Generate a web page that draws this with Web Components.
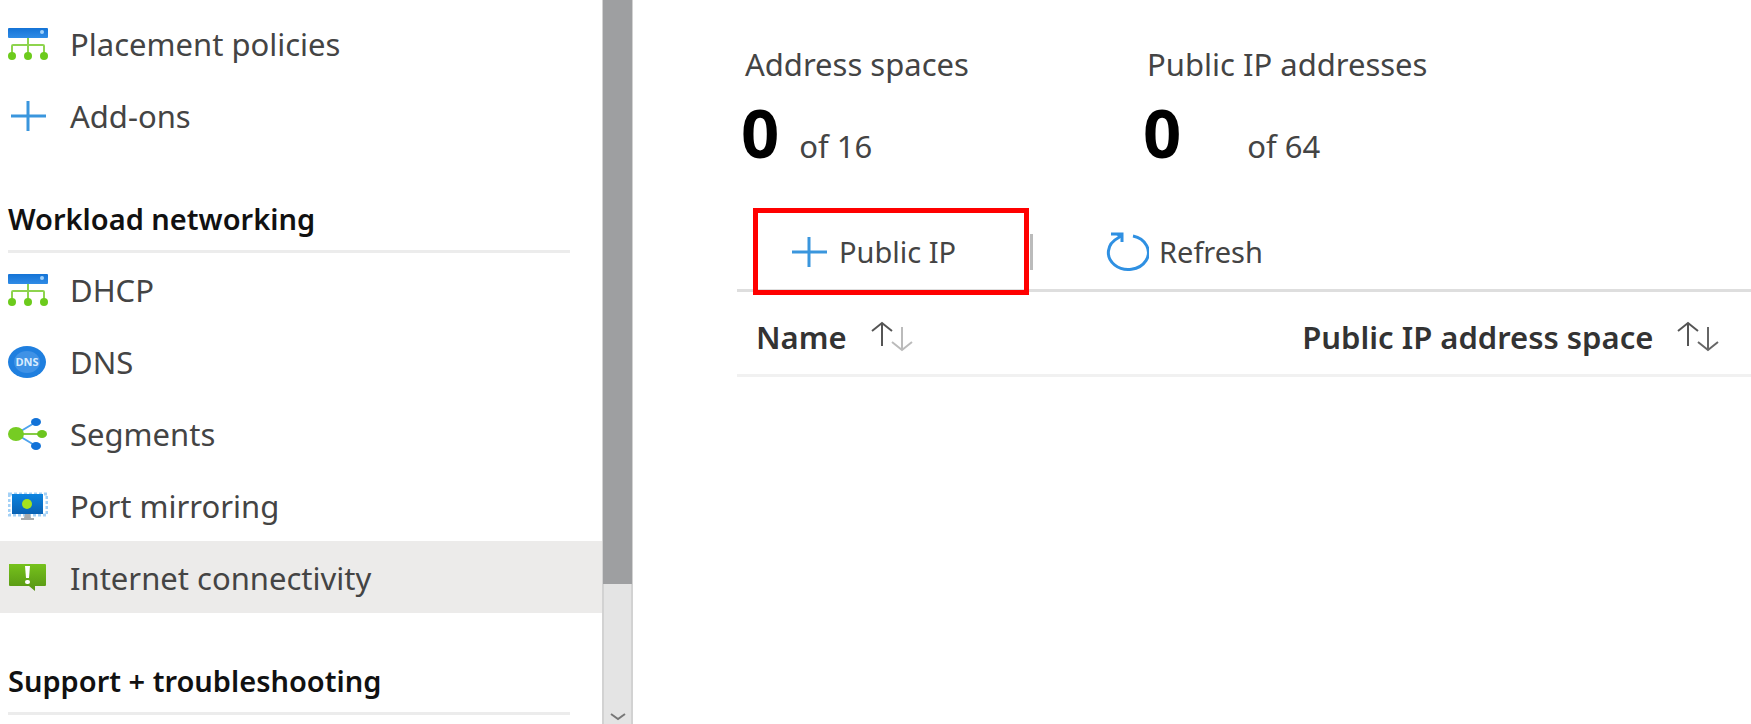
<!DOCTYPE html>
<html lang="en">
<head>
<meta charset="utf-8">
<title>Internet connectivity</title>
<style>
  body { margin: 0; background: #fff; font-family: "Noto Sans", "Open Sans", sans-serif; }
</style>
</head>
<body>
<portal-page>
  <side-menu slot="side">
    <menu-item icon="hierarchy">Placement policies</menu-item>
    <menu-item icon="plus">Add-ons</menu-item>
    <menu-heading>Workload networking</menu-heading>
    <menu-item icon="hierarchy">DHCP</menu-item>
    <menu-item icon="dns">DNS</menu-item>
    <menu-item icon="segments">Segments</menu-item>
    <menu-item icon="mirror">Port mirroring</menu-item>
    <menu-item icon="alert" current>Internet connectivity</menu-item>
    <menu-heading>Support + troubleshooting</menu-heading>
  </side-menu>
  <stat-row>
    <usage-stat value="0" total="of 16">Address spaces</usage-stat>
    <usage-stat value="0" total="of 64" wide>Public IP addresses</usage-stat>
  </stat-row>
  <command-bar>
    <command-button icon="plus" marked>Public IP</command-button>
    <command-button icon="refresh">Refresh</command-button>
  </command-bar>
  <address-table></address-table>
</portal-page>

<script>
const ICONS = {
  hierarchy: `<svg width="40" height="34" viewBox="0 0 40 34">
    <defs><linearGradient id="b" x2="0" y2="1"><stop offset="0" stop-color="#1473d6"/><stop offset="1" stop-color="#2f8be6"/></linearGradient></defs>
    <rect x="0" y="1" width="40" height="10" rx="1" fill="url(#b)"/><circle cx="34" cy="5" r="2" fill="#9fd0fa"/>
    <path d="M20 11v16M4 27v-8q0-1 1-1h30q1 0 1 1v8" fill="none" stroke="#8ed44e" stroke-width="2"/>
    <g fill="#6ccb1c"><circle cx="4" cy="29" r="4"/><circle cx="20" cy="29" r="4"/><circle cx="36" cy="29" r="4"/></g></svg>`,
  plus: `<svg width="40" height="34" viewBox="0 0 40 34"><path d="M3 17h35M20 2v30" stroke="#3a96dd" stroke-width="3"/></svg>`,
  dns: `<svg width="40" height="34" viewBox="0 0 40 34"><ellipse cx="19" cy="17" rx="19" ry="16" fill="#1f7fdf"/>
    <ellipse cx="19" cy="17" rx="13" ry="11" fill="#3f92e6"/>
    <text x="19" y="21" text-anchor="middle" font-family="Open Sans, sans-serif" font-size="11" font-weight="700" fill="#d8ecff">DNS</text></svg>`,
  segments: `<svg width="40" height="34" viewBox="0 0 40 34"><path d="M8 17L28 5M8 17l20 12" stroke="#4ea3ee" stroke-width="2"/>
    <path d="M8 17h26" stroke="#86cc45" stroke-width="2"/><ellipse cx="8" cy="17" rx="8" ry="7" fill="#76cc23"/>
    <ellipse cx="34" cy="17" rx="5" ry="4" fill="#6cc51e"/><ellipse cx="28" cy="5" rx="5" ry="4" fill="#1272d8"/><ellipse cx="28" cy="29" rx="5" ry="4" fill="#1272d8"/></svg>`,
  mirror: `<svg width="40" height="34" viewBox="0 0 40 34">
    <defs><linearGradient id="m" x2="0" y2="1"><stop offset="0" stop-color="#0c84e0"/><stop offset="1" stop-color="#0a62b4"/></linearGradient></defs>
    <rect x="1" y="5" width="38" height="21" fill="none" stroke="#a4d1f6" stroke-width="3" stroke-dasharray="3 2"/>
    <rect x="4" y="5" width="31" height="20" fill="url(#m)"/><circle cx="19" cy="15" r="5" fill="#a5e21c"/>
    <path d="M17 25h5l1 4h3v2H13v-2h3z" fill="#a8abad"/></svg>`,
  alert: `<svg width="40" height="34" viewBox="0 0 40 34">
    <defs><linearGradient id="g" x2="0" y2="1"><stop offset="0" stop-color="#76c21c"/><stop offset="1" stop-color="#569414"/></linearGradient></defs>
    <path d="M1 3h36q1 0 1 1v20q0 1-1 1H27v5l-6-5H2q-1 0-1-1z" fill="url(#g)"/>
    <path d="M17 5h5l-1 12h-3z" fill="#fff"/><rect x="17" y="19" width="5" height="4" rx="2" fill="#fff"/></svg>`,
  refresh: `<svg width="44" height="40" viewBox="0 0 44 40"><g fill="none" stroke="#2f90e2" stroke-width="3">
    <path d="M28 4A20 17 0 1 1 13 6L17 3"/><path d="M6 2h11v8"/></g><path d="M10 2h7v5z" fill="#2f90e2"/></svg>`
};
function define(name, render) {
  customElements.define(name, class extends HTMLElement {
    connectedCallback() {
      if (!this.shadowRoot) this.attachShadow({ mode: "open" }).innerHTML = render(this);
    }
  });
}

define("portal-page", () => `<style>
  :host { display: flex; min-height: 100vh; }
  main { flex: 1; min-width: 0; padding: 40px 0 0 104px; }
</style><slot name="side"></slot><main><slot></slot></main>`);

define("side-menu", () => `<style>
  :host { display: flex; flex: none; width: 633px; }
  nav { flex: 1; padding-top: 7px; min-width: 0; }
  .bar { box-sizing: border-box; width: 31px; display: flex; flex-direction: column; background: #e4e4e4;
    border: solid #d2d2d2; border-width: 0 2px; }
  .thumb { flex: 0 0 584px; margin: 0 -1px; background: #9e9fa1; }
  .bar svg { margin: auto auto 0; display: block; }
</style><nav aria-label="Menu"><slot></slot></nav>
<div class="bar"><div class="thumb"></div><svg width="18" height="12"><path d="M2 2l7 5 7-5" fill="none" stroke="#777" stroke-width="2"/></svg></div>`);

define("menu-heading", () => `<style>
  :host { display: block; height: 102px; box-sizing: border-box; padding: 48px 32px 0 8px; }
  h2 { margin: 0; height: 51px; border-bottom: 3px solid #ececec; font-size: 29px; line-height: 40px; font-weight: 600; color: #111; white-space: nowrap; }
</style><h2><slot></slot></h2>`);

define("menu-item", el => `<style>
  :host { display: block; }
  a { display: flex; align-items: center; gap: 22px; height: 72px; box-sizing: border-box; padding: 1px 8px 0;
    font-size: 31px; line-height: 40px; color: #444; text-decoration: none; white-space: nowrap; }
  :host([current]) a { background: #ecebea; }
  svg { flex: none; }
</style><a href="#" ${el.hasAttribute("current") ? 'aria-current="page"' : ""}>${ICONS[el.getAttribute("icon")]}<slot></slot></a>`);

define("stat-row", () => `<style>
  :host { display: grid; grid-template-columns: 402px 1fr; padding-left: 4px; }
</style><slot></slot>`);

define("usage-stat", el => `<style>
  :host { display: block; color: #444; white-space: nowrap; }
  .label { padding-left: 4px; font-size: 31px; line-height: 48px; }
  .value { display: flex; align-items: baseline; gap: 20px; padding-top: 4px; line-height: 80px; font-size: 31px; }
  :host([wide]) .value { gap: 66px; }
  b { font-size: 67px; color: #000; }
</style><div class="label"><slot></slot></div>
<div class="value"><b>${el.getAttribute("value")}</b><span>${el.getAttribute("total")}</span></div>`);

define("command-bar", () => `<style>
  :host { display: flex; align-items: center; height: 75px; padding-top: 8px; margin-top: 20px; border-bottom: 3px solid #dedede; gap: 72px; }
</style><slot></slot>`);

define("command-button", el => `<style>
  :host { display: block; }
  :host([marked]) { position: relative; margin-left: 16px; width: 280px; box-sizing: border-box; border-right: 3px solid #bbb; height: 36px; }
  button { display: flex; align-items: center; gap: 10px; height: 36px; padding: 0; border: 0; background: none;
    font: 29px/36px "Noto Sans", "Open Sans", sans-serif; color: #444; white-space: nowrap; }
  :host([marked]) button { padding-left: 36px; }
  .mark { position: absolute; inset: -26px 1px -25px 0; border: 5px solid #f00; pointer-events: none; }
</style><button type="button">${ICONS[el.getAttribute("icon")]}<slot></slot></button>${el.hasAttribute("marked") ? '<div class="mark"></div>' : ""}`);

define("sort-arrows", () => `<style>
  :host { display: block; } svg { display: block; }
  .down { stroke: var(--down, #666); }
</style><svg width="42" height="32" viewBox="0 0 42 32" fill="none" stroke-width="2"><path d="M11 25V3M1 10l10-8 10 8" stroke="#555"/>
<path class="down" d="M31 6v22M21 21l10 8 10-8"/></svg>`);

define("address-table", () => `<style>
  :host { display: block; }
  table { width: 100%; border-collapse: collapse; table-layout: fixed; }
  th { height: 74px; padding: 8px 0 0 19px; border-bottom: 3px solid #f1f1f1; font-size: 31px; line-height: 40px; font-weight: 600; color: #333; text-align: left; }
  th:first-child { width: 52%; }
  .cell { display: flex; align-items: center; gap: 24px; white-space: nowrap; }
  .faint { --down: #bbb; }
</style><table><thead><tr>
<th scope="col"><div class="cell">Name<sort-arrows class="faint"></sort-arrows></div></th>
<th scope="col"><div class="cell">Public IP address space<sort-arrows></sort-arrows></div></th>
</tr></thead></table>`);
</script>
</body>
</html>
